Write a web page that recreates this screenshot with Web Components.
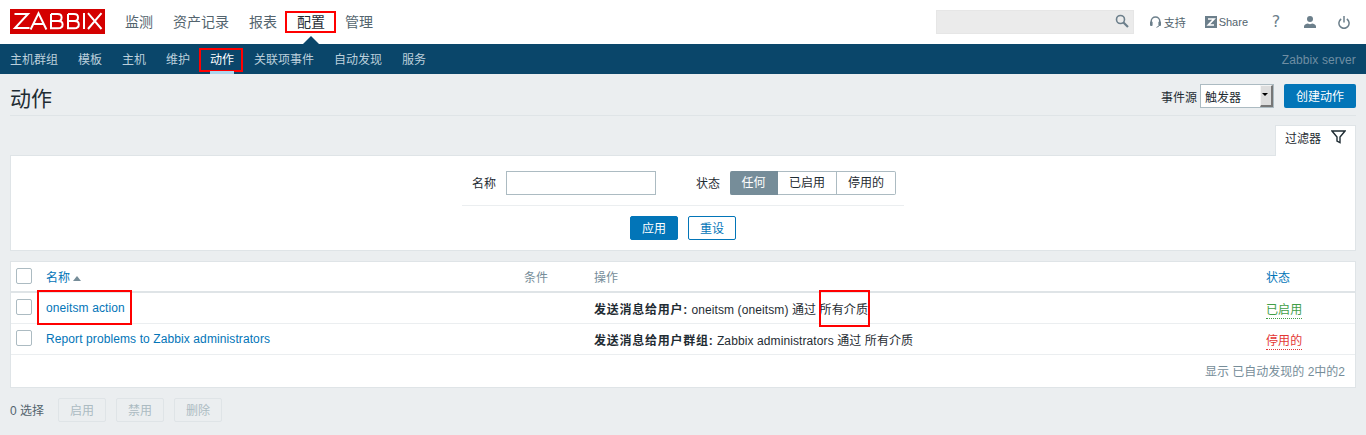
<!DOCTYPE html>
<html lang="zh">
<head>
<meta charset="utf-8">
<title>动作</title>
<style>
  html, body { margin: 0; height: 100%; background: #ebeef0; }
  body { font: 12px "Liberation Sans", "Noto Sans CJK SC", sans-serif; color: #1f2c33; overflow: hidden; }
</style>
</head>
<body>
<zbx-top-bar></zbx-top-bar>
<zbx-sub-nav></zbx-sub-nav>
<zbx-page-head></zbx-page-head>
<zbx-filter></zbx-filter>
<zbx-action-table></zbx-action-table>
<zbx-mass-bar></zbx-mass-bar>

<script>
const FONT = '"Liberation Sans", "Noto Sans CJK SC", sans-serif';

// red annotation frame drawn over a piece of text
class RedBox extends HTMLElement {
  connectedCallback() {
    this.attachShadow({ mode: 'open' });
    this.shadowRoot.innerHTML = `
      <style>
        :host { display: inline-block; position: relative; }
        .frame {
          position: absolute;
          top: var(--t, 0); right: var(--r, 0); bottom: var(--b, 0); left: var(--l, 0);
          border: 2px solid #f00;
          pointer-events: none;
        }
      </style>
      <slot></slot><span class="frame"></span>`;
  }
}
customElements.define('red-box', RedBox);

class ZbxTopBar extends HTMLElement {
  connectedCallback() {
    this.attachShadow({ mode: 'open' });
    this.shadowRoot.innerHTML = `
      <style>
        :host { display: flex; align-items: center; height: 44px; background: #fff; padding: 0 16px 0 10px; font-family: ${FONT}; position: relative; }
        .logo { width: 95px; height: 25px; background: #d40000; flex: none; margin-top: -1px; }
        nav { display: flex; margin-left: 10px; font-size: 14px; color: #53646e; }
        nav a { padding: 0 10px; line-height: 20px; }
        nav a.on { color: #1f2c33; }
        .arrow { position: absolute; left: 303px; bottom: 0; width: 0; height: 0; border: 8px solid transparent; border-top: 0; border-bottom-color: #0a466a; }
        .right { margin-left: auto; display: flex; align-items: center; height: 44px; color: #53646e; font-size: 11px; }
        .search { width: 198px; height: 24px; box-sizing: border-box; background: #ebebeb; border: 1px solid #e6e6e6; position: relative; }
        .search svg { position: absolute; right: 4px; top: 3px; }
        .item { display: flex; align-items: center; }
        svg { display: block; flex: none; }
        .help { margin-left: 23px; width: 10px; font: 16px/16px "DejaVu Sans", sans-serif; color: #6c7f8b; text-align: center; }
      </style>
      <div class="logo">
        <svg width="95" height="25" viewBox="0 0 95 25" fill="none" stroke="#fff" stroke-width="2">
          <path d="M4.5 5H18L5 19H19.5"/>
          <path d="M20.6 20.5L28.5 4.3L36.4 20.5M23.5 15H33.5"/>
          <path d="M41 5V19.2H48Q52.6 19.2 52.6 15.4Q52.6 12 48 12H41M47.5 12Q51.6 12 51.6 8.4Q51.6 5 47.5 5H41"/>
          <path d="M58 5V19.2H64.4Q68.8 19.2 68.8 15.4Q68.8 12 64.4 12H58M64 12Q68 12 68 8.4Q68 5 64 5H58"/>
          <path d="M74 4V20"/>
          <path d="M78 4.2L91.5 20M91.5 4.2L78 20"/>
        </svg>
      </div>
      <nav>
        <a>监测</a><a>资产记录</a><a>报表</a>
        <a class="on"><red-box style="--t:-1px;--r:-11px;--b:-1px;--l:-12px">配置</red-box></a>
        <a>管理</a>
      </nav>
      <span class="arrow"></span>
      <div class="right">
        <div class="search">
          <svg width="14" height="14" viewBox="0 0 14 14" fill="none" stroke="#6c7f8b" stroke-width="1.6"><circle cx="5.5" cy="5.5" r="4"/><path d="M8.5 8.5L13 13" stroke-width="2.2"/></svg>
        </div>
        <div class="item" style="margin-left:16px;gap:3px">
          <svg width="11" height="12" viewBox="0 0 11 12" fill="none" stroke="#6c7f8b" stroke-width="1.5"><path d="M1.2 7V5.2A4.3 4.3 0 0 1 9.8 5.2V7"/><rect x="0" y="5.5" width="2.6" height="4.5" rx="1" fill="#6c7f8b" stroke="none"/><rect x="8.4" y="5.5" width="2.6" height="4.5" rx="1" fill="#6c7f8b" stroke="none"/><path d="M9 10L6.5 11.4" stroke-width="1"/></svg>
          <span>支持</span>
        </div>
        <div class="item" style="margin-left:19px;gap:2px">
          <svg width="12" height="12" viewBox="0 0 12 12"><rect width="12" height="12" fill="#6c7f8b"/><path d="M3 3H9L3.4 9H9" fill="none" stroke="#fff" stroke-width="1.7"/></svg>
          <span>Share</span>
        </div>
        <span class="help">?</span>
        <svg style="margin-left:23px" width="12" height="12" viewBox="0 0 12 12" fill="#6c7f8b"><circle cx="6" cy="3" r="3"/><path d="M0 12V10.6Q0 8.4 3.6 7.6L6 8.2L8.4 7.6Q12 8.4 12 10.6V12Z"/></svg>
        <svg style="margin-left:22px" width="12" height="13" viewBox="0 0 12 13" fill="none" stroke="#6c7f8b" stroke-width="1.5"><path d="M3.2 3A5.1 5.1 0 1 0 8.8 3"/><path d="M6 0V6.5"/></svg>
      </div>`;
  }
}
customElements.define('zbx-top-bar', ZbxTopBar);

class ZbxSubNav extends HTMLElement {
  connectedCallback() {
    this.attachShadow({ mode: 'open' });
    this.shadowRoot.innerHTML = `
      <style>
        :host { display: flex; align-items: stretch; height: 30px; background: #0a466a; font: 12px/30px ${FONT}; color: #bcd0dc; padding: 0 10px 0 0; }
        a { padding: 1px 10px 0; height: 29px; position: relative; }
        a.on { color: #fff; }
        a.on::after { content: ""; position: absolute; left: 10px; right: 10px; bottom: 0; height: 3px; background: #acd5ed; }
        .srv { margin-left: auto; color: #6f8ea3; padding-top: 1px; letter-spacing: .12px; }
        red-box { line-height: 16px; }
      </style>
      <a>主机群组</a><a>模板</a><a>主机</a><a>维护</a>
      <a class="on"><red-box style="--t:-4px;--r:-9px;--b:-4px;--l:-11px">动作</red-box></a>
      <a>关联项事件</a><a>自动发现</a><a>服务</a>
      <span class="srv">Zabbix server</span>`;
  }
}
customElements.define('zbx-sub-nav', ZbxSubNav);

class ZbxPageHead extends HTMLElement {
  connectedCallback() {
    this.attachShadow({ mode: 'open' });
    this.shadowRoot.innerHTML = `
      <style>
        :host { display: flex; align-items: flex-start; margin: 0 10px; height: 41px; border-bottom: 1px solid #dfe4e7; font: 12px ${FONT}; }
        h1 { margin: 0; padding-top: 13px; font-size: 21px; font-weight: normal; color: #1f2c33; line-height: 24px; }
        .ctl { margin-left: auto; margin-top: 10px; display: flex; align-items: center; }
        .sel { height: 22px; margin-left: 3px; border: 1px solid #acbbc2; background: #fff; line-height: 26px; position: relative; padding-left: 4px; width: 68px; }
        .drop { position: absolute; right: 0; top: 0; bottom: 0; width: 13px; background: #ddd; border-left: 1px solid #f4f4f4; border-top: 1px solid #f4f4f4; border-right: 2px solid #777; border-bottom: 2px solid #777; box-sizing: border-box; }
        .drop::after { content: ""; position: absolute; left: 1px; top: 7px; border: 3.5px solid transparent; border-top: 3.5px solid #000; border-bottom: 0; }
        button { margin-left: 10px; width: 72px; height: 24px; border: 0; border-radius: 2px; background: #0275b8; color: #fff; font: 12px ${FONT}; padding: 0 0 2px; }
      </style>
      <h1>动作</h1>
      <div class="ctl">
        <span>事件源</span>
        <div class="sel">触发器<span class="drop"></span></div>
        <button>创建动作</button>
      </div>`;
  }
}
customElements.define('zbx-page-head', ZbxPageHead);

class ZbxFilter extends HTMLElement {
  connectedCallback() {
    this.attachShadow({ mode: 'open' });
    this.shadowRoot.innerHTML = `
      <style>
        :host { display: block; margin: 9px 10px 0; font: 12px ${FONT}; }
        .tabs { display: flex; justify-content: flex-end; }
        .tab { width: 81px; height: 31px; box-sizing: border-box; background: #fff; border: 1px solid #dfe4e7; border-bottom: 0; margin-bottom: -1px; position: relative; z-index: 1; display: flex; align-items: flex-start; padding: 5px 0 0 9px; gap: 10px; line-height: 16px; }
        .box { background: #fff; border: 1px solid #dfe4e7; height: 96px; box-sizing: border-box; display: flex; flex-direction: column; align-items: center; }
        .row { display: flex; align-items: center; width: 442px; height: 50px; padding: 15px 0 10px 10px; box-sizing: border-box; border-bottom: 1px solid #ebeef0; }
        .row > span:not(.in) { margin-top: -2px; }
        .in { width: 150px; height: 24px; box-sizing: border-box; border: 1px solid #acbbc2; margin-left: 10px; background: #fff; }
        .lab2 { margin-left: 40px; }
        .seg { display: flex; margin-left: 10px; height: 24px; }
        .seg span { box-sizing: border-box; border: 1px solid #acbbc2; border-left: 0; text-align: center; line-height: 22px; width: 59px; color: #1f2c33; }
        .seg span:first-child { width: 48px; background: #768d99; border-color: #768d99; color: #fff; border-radius: 2px 0 0 2px; }
        .seg span:last-child { border-radius: 0 2px 2px 0; }
        .btns { display: flex; gap: 10px; margin-top: 10px; }
        button { width: 48px; height: 24px; border-radius: 2px; border: 1px solid #0275b8; font: 12px ${FONT}; padding: 0 0 2px; background: #fff; color: #0275b8; }
        button.pri { background: #0275b8; color: #fff; }
      </style>
      <div class="tabs">
        <div class="tab">过滤器
          <svg style="margin-top:-1px" width="15" height="14" viewBox="0 0 15 14" fill="none" stroke="#1f2c33" stroke-width="1.4"><path d="M1 1H14L9 7V12.6L6 11V7Z"/></svg>
        </div>
      </div>
      <div class="box">
        <div class="row">
          <span>名称</span><span class="in"></span>
          <span class="lab2">状态</span>
          <div class="seg"><span>任何</span><span>已启用</span><span>停用的</span></div>
        </div>
        <div class="btns"><button class="pri">应用</button><button>重设</button></div>
      </div>`;
  }
}
customElements.define('zbx-filter', ZbxFilter);

class ZbxActionTable extends HTMLElement {
  connectedCallback() {
    this.attachShadow({ mode: 'open' });
    this.shadowRoot.innerHTML = `
      <style>
        :host { display: block; margin: 10px 10px 0; background: #fff; border: 1px solid #dfe4e7; height: 127px; box-sizing: border-box; font: 12px ${FONT}; letter-spacing: .1px; }
        table { width: 100%; border-collapse: collapse; table-layout: fixed; }
        th, td { padding: 0; text-align: left; font-weight: normal; vertical-align: middle; }
        th { height: 24px; border-bottom: 2px solid #dfe4e7; color: #768d99; vertical-align: bottom; padding-bottom: 5px; line-height: 16px; box-sizing: content-box; }
        td { height: 30px; border-bottom: 1px solid #ebeef0; }
        th:first-child, td:first-child { padding-left: 5px; }
        th:first-child { vertical-align: top; padding-top: 6px; padding-bottom: 0; height: 23px; }
        .cb { display: block; width: 16px; height: 16px; box-sizing: border-box; border: 1px solid #acbbc2; border-radius: 2px; background: #fff; }
        td .cb { margin-top: -2px; }
        a, .blue { color: #0275b8; }
        .sort { display: inline-block; width: 0; height: 0; border: 4px solid transparent; border-top: 0; border-bottom: 5px solid #768d99; margin-left: 3px; vertical-align: 1px; }
        b { font-weight: bold; letter-spacing: .75px; }
        .ok, .off { border-bottom: 1px dotted; padding-bottom: 1px; }
        .ok { color: #429e47; }
        .off { color: #e33734; }
        .foot { text-align: right; color: #768d99; padding: 9px 10px 0 0; line-height: 16px; letter-spacing: 0; }
      </style>
      <table>
        <colgroup><col style="width:35px"><col style="width:478px"><col style="width:70px"><col style="width:672px"><col></colgroup>
        <tr>
          <th><span class="cb"></span></th>
          <th><span class="blue">名称</span><span class="sort"></span></th>
          <th>条件</th><th>操作</th><th><span class="blue">状态</span></th>
        </tr>
        <tr>
          <td><span class="cb"></span></td>
          <td><red-box style="--t:-11px;--r:-7px;--b:-10px;--l:-9px"><a>oneitsm action</a></red-box></td>
          <td></td>
          <td><b>发送消息给用户:</b> oneitsm (oneitsm) 通过 <red-box style="--t:-10px;--r:-2px;--b:-10px;--l:-1px">所有介质</red-box></td>
          <td><span class="ok">已启用</span></td>
        </tr>
        <tr>
          <td><span class="cb"></span></td>
          <td><a>Report problems to Zabbix administrators</a></td>
          <td></td>
          <td><b>发送消息给用户群组:</b> Zabbix administrators 通过 所有介质</td>
          <td><span class="off">停用的</span></td>
        </tr>
      </table>
      <div class="foot">显示 已自动发现的 2中的2</div>`;
  }
}
customElements.define('zbx-action-table', ZbxActionTable);

class ZbxMassBar extends HTMLElement {
  connectedCallback() {
    this.attachShadow({ mode: 'open' });
    this.shadowRoot.innerHTML = `
      <style>
        :host { display: flex; align-items: center; margin: 10px 10px 0; height: 24px; font: 12px ${FONT}; color: #53646e; }
        span { margin: -2px 14px 0 0; }
        button { width: 48px; height: 24px; margin-right: 10px; border: 1px solid #dfe4e7; border-radius: 2px; background: #ebeef0; color: #acbbc2; font: 12px ${FONT}; padding: 0 0 2px; }
      </style>
      <span>0 选择</span>
      <button disabled>启用</button><button disabled>禁用</button><button disabled>删除</button>`;
  }
}
customElements.define('zbx-mass-bar', ZbxMassBar);
</script>
</body>
</html>
